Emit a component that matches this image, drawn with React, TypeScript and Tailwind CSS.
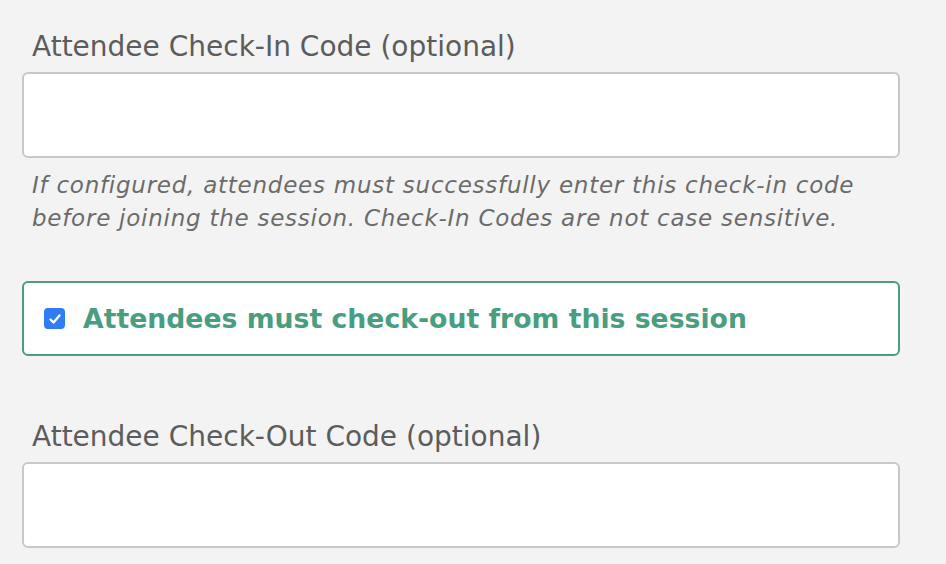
import React from "react";

export default function App() {
  return (
    <div
      className="w-[946px] h-[564px] bg-[#f3f3f3] overflow-hidden"
      style={{ fontFamily: '"DejaVu Sans", "Open Sans", sans-serif' }}
    >
      <div className="pl-[22px] pr-[46px] pt-[29px] flex flex-col">
        <label className="pl-[10px] text-[28px] leading-[36px] text-[#5c5c5c]">
          Attendee Check-In Code (optional)
        </label>
        <input
          type="text"
          className="mt-[7px] h-[86px] w-full bg-white border-2 border-[#c8c8c8] rounded-[6px] outline-none"
        />
        <p className="mt-[11px] pl-[10px] italic text-[23px] tracking-[0.75px] leading-[33px] text-[#6b6b6b]">
          If configured, attendees must successfully enter this check-in code
          <br />
          before joining the session. Check-In Codes are not case sensitive.
        </p>
        <div className="mt-[46px] h-[75px] bg-white border-2 border-[#4a9e80] rounded-[6px] flex items-center pl-[20px]">
          <span className="w-[21px] h-[21px] rounded-[4px] bg-[#2f7cf6] flex items-center justify-center">
            <svg width="14" height="14" viewBox="0 0 14 14">
              <path d="M2.5 7.5 L5.5 10.5 L11.5 3.5" fill="none" stroke="white" strokeWidth="2.4" strokeLinecap="round" strokeLinejoin="round" />
            </svg>
          </span>
          <span className="ml-[18px] text-[26.7px] leading-[36px] font-bold text-[#4a9e80]">
            Attendees must check-out from this session
          </span>
        </div>
        <label className="mt-[63px] pl-[10px] text-[28px] leading-[36px] text-[#5c5c5c]">
          Attendee Check-Out Code (optional)
        </label>
        <input
          type="text"
          className="mt-[7px] h-[86px] w-full bg-white border-2 border-[#c8c8c8] rounded-[6px] outline-none"
        />
      </div>
    </div>
  );
}
